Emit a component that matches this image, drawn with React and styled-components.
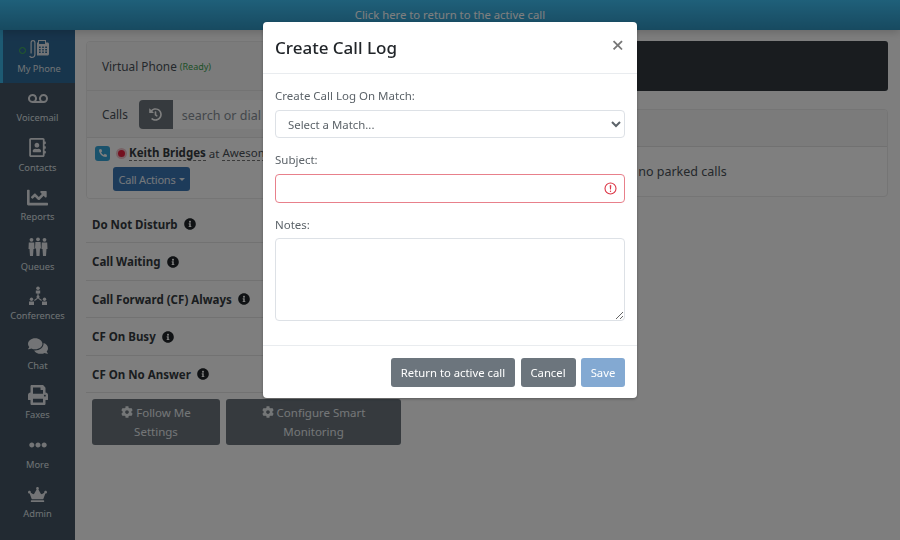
import React from 'react'
import styled, { createGlobalStyle } from 'styled-components'
import {
  FaChartLine,
  FaCog,
  FaComments,
  FaCrown,
  FaEllipsisH,
  FaHistory,
  FaInfoCircle,
  FaPhoneAlt,
  FaPrint,
  FaRegAddressBook,
  FaVoicemail,
} from 'react-icons/fa'

const GlobalStyle = createGlobalStyle`
  html, body { margin: 0; padding: 0; background: #fff; }
  * { box-sizing: border-box; }
  body { font-family: "Noto Sans", "Open Sans", sans-serif; color: #212529; }
`

const Page = styled.div`
  width: 900px;
  height: 540px;
  overflow: hidden;
  display: flex;
  flex-direction: column;
`

const CallBar = styled.div`
  height: 30px;
  flex: none;
  background: linear-gradient(#3fc0f4, #2f94c0);
  color: #fff;
  font-size: 11.3px;
  line-height: 30px;
  text-align: center;
  box-shadow: 0 2px 10px rgba(0, 0, 0, 0.2);
  position: relative;
`

const Body = styled.div`
  flex: 1;
  display: flex;
  min-height: 0;
`

const Sidebar = styled.nav`
  width: 75px;
  flex: none;
  background: #455564;
  display: flex;
  flex-direction: column;
`

const NavItem = styled.div`
  height: ${(p) => (p.$active ? '53px' : '49.5px')};
  margin-bottom: ${(p) => (p.$active ? '-3.5px' : '0')};
  flex: none;
  display: flex;
  flex-direction: column;
  align-items: center;
  padding-top: ${(p) => (p.$active ? '8px' : '7.5px')};
  background: ${(p) => (p.$active ? '#2f6a99' : 'transparent')};
  border-left: ${(p) => (p.$active ? '3px solid #3ab4e6' : '0')};
  color: #dfe4e8;
  font-size: 9.3px;
  line-height: 14px;
`

const NavIcon = styled.div`
  height: 22px;
  display: flex;
  align-items: center;
  justify-content: center;
  font-size: ${(p) => p.$size || 20}px;
  margin-bottom: 2px;
  color: #e6e9ec;
`

const StatusDot = styled.span`
  position: absolute;
  left: 19px;
  top: 47px;
  width: 7px;
  height: 7px;
  border-radius: 50%;
  border: 1.5px solid #45b94f;
`

const Main = styled.main`
  flex: 1;
  background: #fdfdfd;
  padding: 11px 12px 0 11px;
  display: grid;
  grid-template-columns: 395px 1fr;
  column-gap: 12px;
  align-items: start;
`

const Column = styled.div`
  display: flex;
  flex-direction: column;
`

const Card = styled.div`
  border: 1px solid #eaeaea;
  border-radius: 4px;
  background: #fff;
  overflow: hidden;
`

const CardRow = styled.div`
  height: ${(p) => p.$height}px;
  display: flex;
  align-items: center;
  padding-left: 15px;
  background: #f7f7f7;
  border-bottom: 1px solid #e6e6e6;
  font-size: 11.8px;
  color: #495057;
`

const Ready = styled.span`
  color: #3ca14f;
  font-size: 9px;
  margin-left: 3px;
  margin-top: 1px;
`

const HistoryButton = styled.div`
  width: 34px;
  height: 29px;
  margin-left: 11px;
  background: #6c757d;
  color: #fff;
  border-radius: 4px 0 0 4px;
  display: flex;
  align-items: center;
  justify-content: center;
  font-size: 13px;
`

const DialInput = styled.div`
  flex: 1;
  height: 29px;
  background: #fff;
  color: #868e96;
  padding-left: 9px;
  line-height: 31px;
  font-size: 12.5px;
`

const CallEntry = styled.div`
  height: 60px;
  padding: 7px 0 0 8px;
  background: #fff;
`

const CallLine = styled.div`
  display: flex;
  align-items: center;
  font-size: 11.5px;
  color: #495057;
  white-space: nowrap;
`

const PhoneBadge = styled.span`
  width: 15px;
  height: 15px;
  flex: none;
  border-radius: 3px;
  background: #35a5d8;
  color: #fff;
  display: flex;
  align-items: center;
  justify-content: center;
  font-size: 8px;
  margin-right: 6px;
`

const RecDot = styled.span`
  width: 7px;
  height: 7px;
  flex: none;
  box-sizing: content-box;
  border-radius: 50%;
  background: #e8223f;
  border: 2px solid #f3c4cb;
  margin-right: 2px;
`

const Caller = styled.span`
  font-weight: 700;
  color: #343a40;
  border-bottom: 1px dashed #777;
  line-height: 15px;
  margin-right: 3px;
`

const Company = styled.span`
  border-bottom: 1px dashed #777;
  line-height: 15px;
  margin-left: 3px;
`

const ActionButton = styled.div`
  width: 77px;
  height: 24px;
  margin: 6px 0 0 18px;
  background: #3b77b5;
  border-radius: 3px;
  color: #e8eef5;
  font-size: 11px;
  display: flex;
  align-items: center;
  justify-content: center;
  letter-spacing: -0.2px;
`

const Caret = styled.span`
  width: 0;
  height: 0;
  margin-left: 3px;
  border-left: 3px solid transparent;
  border-right: 3px solid transparent;
  border-top: 3px solid #e8eef5;
`

const SettingsList = styled.div`
  display: flex;
  flex-direction: column;
`

const SettingRow = styled.div`
  height: ${(p) => (p.$first ? 44 : 37.5)}px;
  flex: none;
  display: flex;
  align-items: center;
  padding-left: 6px;
  padding-top: ${(p) => (p.$first ? 7 : 1)}px;
  border-bottom: 1px solid #e4e4e4;
  font-size: 11.5px;
  font-weight: 700;
  color: #343a40;

  svg {
    margin-left: 6px;
    font-size: 12px;
    color: #212529;
  }
`

const SettingButtons = styled.div`
  display: flex;
  gap: 6px;
  padding: 6px 0 0 6px;
`

const SettingButton = styled.div`
  width: ${(p) => p.$width}px;
  height: 46px;
  background: #6c757d;
  border-radius: 3px;
  color: #e9ecef;
  font-size: 11.5px;
  line-height: 18.5px;
  text-align: center;
  padding: 5px 8px 0;

  svg {
    font-size: 12px;
    vertical-align: -1px;
  }
`

const DarkPanel = styled.div`
  height: 50px;
  background: #32393f;
  border-radius: 3px;
  margin-bottom: 18px;
`

const ParkedHeader = styled.div`
  height: 37px;
  background: #f7f7f7;
  border-bottom: 1px solid #e2e2e2;
`

const ParkedBody = styled.div`
  height: 49px;
  padding-left: 85px;
  font-size: 12.5px;
  line-height: 50px;
  color: #495057;
`

const Overlay = styled.div`
  position: fixed;
  inset: 0;
  background: rgba(0, 0, 0, 0.5);
  display: flex;
  justify-content: center;
  align-items: flex-start;
  padding-top: 22px;
`

const Modal = styled.div`
  width: 374px;
  height: 376px;
  background: #fff;
  border-radius: 4px;
  display: flex;
  flex-direction: column;
  box-shadow: 0 1px 3px rgba(0, 0, 0, 0.3);
`

const ModalHeader = styled.div`
  height: 52px;
  flex: none;
  display: flex;
  align-items: center;
  justify-content: space-between;
  padding: 0 13px 0 12px;
  border-bottom: 1px solid #e9ecef;
`

const ModalTitle = styled.h5`
  margin: 0;
  font-size: 17px;
  font-weight: 500;
  color: #212529;
`

const CloseButton = styled.span`
  font-size: 22px;
  line-height: 22px;
  font-weight: 500;
  color: #777;
  margin-top: -7px;
`

const ModalBody = styled.div`
  flex: 1;
  padding: 13px 12px 0;
  display: flex;
  flex-direction: column;
`

const FieldLabel = styled.label`
  display: block;
  font-size: 11.5px;
  line-height: 17px;
  color: #5c6369;
  margin-bottom: ${(p) => p.$gap || 5}px;
`

const Field = styled.div`
  position: relative;
  margin-bottom: 13px;
`

const MatchSelect = styled.select`
  display: block;
  width: 100%;
  height: 28px;
  padding: 1px 8px 0;
  border: 1px solid #dde1e6;
  border-radius: 4px;
  background: #fff;
  color: #5c6369;
  font-family: inherit;
  font-size: 11.4px;
`

const SubjectInput = styled.input`
  display: block;
  width: 100%;
  height: 29px;
  border: 1.5px solid #e8808b;
  border-radius: 4px;
  outline: 0;
  background: #fff;
`

const InvalidIcon = styled.svg`
  position: absolute;
  right: 8px;
  top: 8px;
  width: 13px;
  height: 13px;
`

const NotesArea = styled.textarea`
  display: block;
  width: 100%;
  height: 83px;
  border: 1px solid #dde1e6;
  border-radius: 4px;
  outline: 0;
  background: #fff;
`

const ModalFooter = styled.div`
  height: 53px;
  flex: none;
  border-top: 1px solid #e9ecef;
  display: flex;
  justify-content: flex-end;
  align-items: flex-start;
  gap: 5.5px;
  padding: 12px 12px 0 0;
`

const FooterButton = styled.div`
  height: 29px;
  width: ${(p) => p.$width}px;
  text-align: center;
  background: ${(p) => (p.$primary ? '#83a9d2' : '#6c757d')};
  color: #fff;
  border-radius: 3px;
  font-size: 11.3px;
  line-height: 29px;
`

const DeskPhone = () => (
  <svg width="20" height="20" viewBox="0 0 20 20" fill="currentColor">
    <path d="M1.5 3.5C1.5 1.8 2.6 1 4 1s2.5.8 2.5 2.5v12C6.500 17.500 5 19 3 19c-1.300 0-2.500-.7-2.800-1.800l1.100-.4c.2.700.9 1 1.700 1 1.300 0 2.300-.9 2.300-2.300V3.700C5.300 2.700 4.800 2.200 4 2.200s-1.300.5-1.300 1.500v10.800H1.500z" />
    <path fillRule="evenodd" d="M8 3.500h1V1h8v2.500h1.500c.8 0 1.500.7 1.500 1.500v10c0 .8-.7 1.500-1.500 1.500H8zM10 2v3h6V2zM10 7.500V9h1.700V7.500zm3.200 0V9h1.600V7.500zm3 0V9H18V7.500zM10 10v1.500h1.700V10zm3.200 0v1.500h1.600V10zm3 0v1.500H18V10zM10 12.500V14h1.700v-1.500zm3.200 0V14h1.600v-1.500zm3 0V14H18v-1.500z" />
  </svg>
)

const QueuePeople = () => (
  <svg width="20" height="20" viewBox="0 0 20 20" fill="currentColor">
    <circle cx="3.500" cy="2.800" r="1.900" />
    <circle cx="10" cy="2.300" r="1.900" />
    <circle cx="16.500" cy="2.800" r="1.900" />
    <path d="M.8 5.500h5.400l.3 6.500h-1L5 19H2l-.5-7h-1zM7.400 5h5.200l.4 6.500h-1l-.5 7.500H8.500L8 11.500H7zM13.800 5.500h5.400l.3 6.500h-1l-.5 7h-3l-.5-7h-1z" />
  </svg>
)

const ConferenceTree = () => (
  <svg width="20" height="20" viewBox="0 0 20 20" fill="currentColor">
    <circle cx="10" cy="2.200" r="1.800" />
    <path d="M7.800 4.500h4.400v3H7.800z" />
    <circle cx="3.500" cy="13.200" r="1.700" />
    <circle cx="16.500" cy="13.200" r="1.700" />
    <circle cx="10" cy="10.800" r="1.500" />
    <path d="M1 15.500h5V19H1zM14 15.500h5V19h-5z" />
    <path d="M9.500 7h1v3.500h-1zM9.300 11.700l.7.7-3.300 2.500-.6-.8zM10.700 11.700l-.7.7 3.300 2.500.6-.8z" />
  </svg>
)

const navItems = [
  { label: 'Voicemail', icon: <FaVoicemail />, size: 20 },
  { label: 'Contacts', icon: <FaRegAddressBook />, size: 19 },
  { label: 'Reports', icon: <FaChartLine />, size: 21 },
  { label: 'Queues', icon: <QueuePeople /> },
  { label: 'Conferences', icon: <ConferenceTree /> },
  { label: 'Chat', icon: <FaComments />, size: 20 },
  { label: 'Faxes', icon: <FaPrint />, size: 20 },
  { label: 'More', icon: <FaEllipsisH />, size: 18 },
  { label: 'Admin', icon: <FaCrown />, size: 19 },
]

const settings = ['Do Not Disturb', 'Call Waiting', 'Call Forward (CF) Always', 'CF On Busy', 'CF On No Answer']

export default function App() {
  return (
    <Page>
      <GlobalStyle />
      <CallBar>Click here to return to the active call</CallBar>
      <Body>
        <Sidebar>
          <NavItem $active>
            <NavIcon><DeskPhone /></NavIcon>
            My Phone
          </NavItem>
          {navItems.map((item) => (
            <NavItem key={item.label}>
              <NavIcon $size={item.size}>{item.icon}</NavIcon>
              {item.label}
            </NavItem>
          ))}
        </Sidebar>
        <StatusDot />
        <Main>
          <Column>
            <Card>
              <CardRow $height={49}>
                Virtual Phone <Ready>(Ready)</Ready>
              </CardRow>
              <CardRow $height={47}>
                Calls
                <HistoryButton><FaHistory /></HistoryButton>
                <DialInput>search or dial</DialInput>
              </CardRow>
              <CallEntry>
                <CallLine>
                  <PhoneBadge><FaPhoneAlt /></PhoneBadge>
                  <RecDot />
                  <Caller>Keith Bridges</Caller> at <Company>Awesome</Company>
                </CallLine>
                <ActionButton>Call Actions<Caret /></ActionButton>
              </CallEntry>
            </Card>
            <SettingsList>
              {settings.map((label, i) => (
                <SettingRow key={label} $first={i === 0}>
                  {label}
                  <FaInfoCircle />
                </SettingRow>
              ))}
            </SettingsList>
            <SettingButtons>
              <SettingButton $width={128}><FaCog /> Follow Me Settings</SettingButton>
              <SettingButton $width={175}><FaCog /> Configure Smart Monitoring</SettingButton>
            </SettingButtons>
          </Column>
          <Column>
            <DarkPanel />
            <Card>
              <ParkedHeader />
              <ParkedBody>There are no parked calls</ParkedBody>
            </Card>
          </Column>
        </Main>
      </Body>
      <Overlay>
        <Modal>
          <ModalHeader>
            <ModalTitle>Create Call Log</ModalTitle>
            <CloseButton>×</CloseButton>
          </ModalHeader>
          <ModalBody>
            <FieldLabel $gap={6}>Create Call Log On Match:</FieldLabel>
            <Field>
              <MatchSelect defaultValue="">
                <option value="">Select a Match...</option>
              </MatchSelect>
            </Field>
            <FieldLabel $gap={6}>Subject:</FieldLabel>
            <Field>
              <SubjectInput />
              <InvalidIcon viewBox="0 0 13 13" fill="none" stroke="#dc3545">
                <circle cx="6.500" cy="6.500" r="5.500" strokeWidth="1.100" />
                <path strokeLinejoin="round" d="M6.200 3.400h.6L6.500 7.300z" />
                <circle cx="6.500" cy="9.300" r=".7" fill="#dc3545" stroke="none" />
              </InvalidIcon>
            </Field>
            <FieldLabel>Notes:</FieldLabel>
            <Field>
              <NotesArea />
            </Field>
          </ModalBody>
          <ModalFooter>
            <FooterButton $width={124}>Return to active call</FooterButton>
            <FooterButton $width={55}>Cancel</FooterButton>
            <FooterButton $width={44} $primary>Save</FooterButton>
          </ModalFooter>
        </Modal>
      </Overlay>
    </Page>
  )
}
